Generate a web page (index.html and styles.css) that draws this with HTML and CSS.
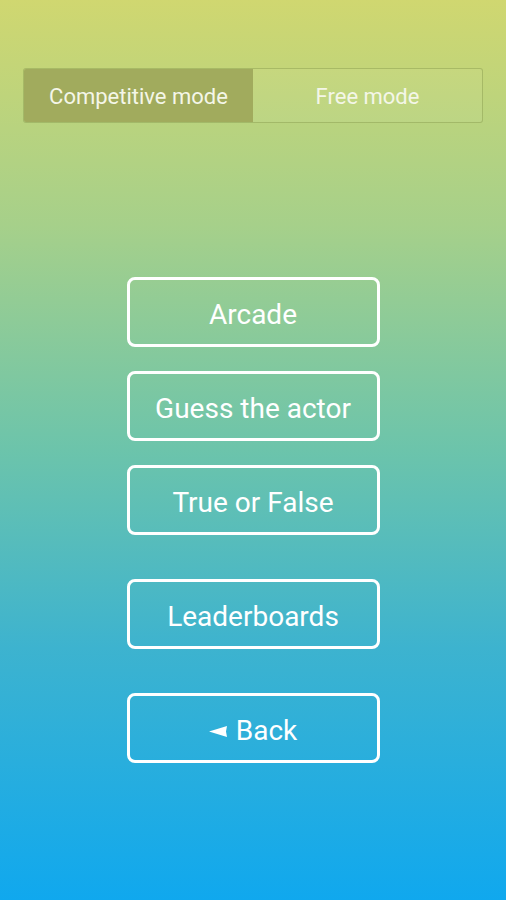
FILE: index.html
```html
<!DOCTYPE html>
<html lang="en">
<head>
    <meta charset="utf-8" />
    <meta name="viewport" content="width=device-width, initial-scale=1.0">
    <title>Quiz modes</title>
    <link rel="stylesheet" href="styles.css">
</head>
<body>
    <div class="screen">
        <div class="modes">
            <div class="mode active">Competitive mode</div>
            <div class="mode">Free mode</div>
        </div>

        <div class="menu">
            <div class="group">
                <button class="btn">Arcade</button>
                <button class="btn">Guess the actor</button>
                <button class="btn">True or False</button>
            </div>
            <button class="btn">Leaderboards</button>
            <button class="btn">
                <svg class="arrow" width="18" height="11" viewBox="0 0 18 11"><path d="M0 5.5 L18 0 L17 5.5 L18 11 Z" fill="#fff"/></svg>
                Back
            </button>
        </div>
    </div>
</body>
</html>
```

FILE: styles.css
```css
body {
    margin: 0;
    font-family: Roboto, "Liberation Sans", sans-serif;
}

.screen {
    height: 900px;
    background: linear-gradient(to bottom, #d0d770 0%, #a6d08a 25%, #6cc4ab 50%, #3db3cf 72%, #10a8ee 100%);
    padding: 68px 23px 0;
    box-sizing: border-box;
}

.modes {
    display: flex;
    height: 53px;
    border: 1px solid rgba(130, 150, 70, 0.45);
    border-radius: 3px;
    background: rgba(255, 255, 255, 0.05);
    overflow: hidden;
}

.mode {
    flex: 1;
    display: flex;
    align-items: center;
    justify-content: center;
    color: #f4f6e8;
    font-size: 22px;
    padding-top: 2px;
}

.mode.active {
    background: #a1ab5d;
}

.menu {
    display: flex;
    flex-direction: column;
    align-items: center;
    gap: 44px;
    margin-top: 154px;
}

.group {
    display: flex;
    flex-direction: column;
    gap: 24px;
}

.btn {
    width: 253px;
    height: 70px;
    border: 3px solid #ffffff;
    border-radius: 8px;
    background: transparent;
    color: #ffffff;
    font-family: Roboto, "Liberation Sans", sans-serif;
    font-size: 28px;
    padding: 4px 0 0;
}

.arrow {
    vertical-align: 3px;
    margin-right: 2px;
}
```
